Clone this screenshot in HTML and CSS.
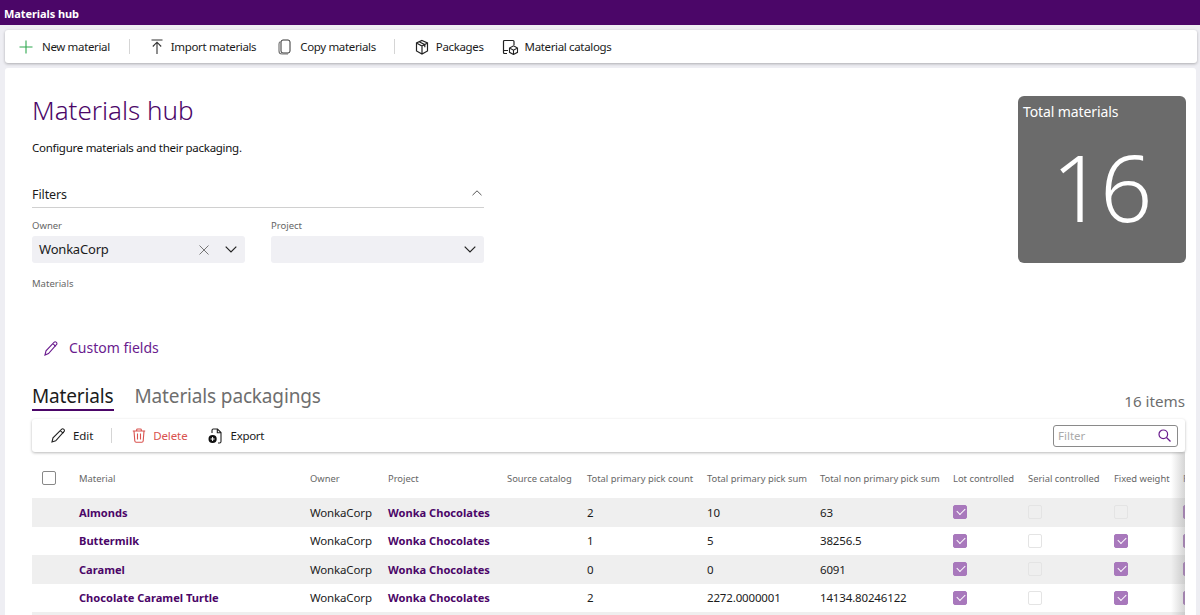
FILE: index.html
```
<!DOCTYPE html>
<html lang="en">
<head>
<meta charset="utf-8">
<title>Materials hub</title>
<link rel="stylesheet" href="styles.css">
</head>
<body>
<header class="appbar">Materials hub</header>
<nav class="cmdbar">
  <button class="cmd cmd-new"><svg width="14" height="14" viewBox="0 0 14 14" class="ic"><path d="M7 .5v13M.5 7h13" stroke="#2fa84f" stroke-width="1.100" fill="none"/></svg>New material</button>
  <span class="sep sep-a"></span>
  <button class="cmd cmd-import"><svg width="14" height="16" viewBox="0 0 14 16" class="ic"><path d="M1.500 1h11M7 15V3.500M2.800 7.500 7 3.200l4.200 4.300" stroke="#333" stroke-width="1.100" fill="none"/></svg>Import materials</button>
  <button class="cmd cmd-copy"><svg width="13" height="16" viewBox="0 0 13 16" class="ic"><rect x="3" y="1" width="9" height="13" rx="2" stroke="#333" fill="#fff"/><path d="M2.500 2.500C1.400 3 1 3.800 1 5v7c0 1.800 1 3 3 3h6" stroke="#777" stroke-width="1.200" fill="none"/></svg>Copy materials</button>
  <span class="sep sep-b"></span>
  <button class="cmd cmd-pack"><svg width="14" height="16" viewBox="0 0 14 16" class="ic"><path d="M7 1.500 12.500 4v8L7 15l-5.500-3V4zM1.500 4 7 7l5.500-3M7 7v8M4.200 2.800l5.600 2.900v2.500" stroke="#222" stroke-width="1.200" fill="none"/></svg>Packages</button>
  <button class="cmd cmd-cat"><svg width="17" height="16" viewBox="0 0 17 16" class="ic"><path d="M5 14.500H2.500a1 1 0 0 1-1-1v-11a1 1 0 0 1 1-1h8.500a1 1 0 0 1 1 1V6M1.500 11.500H6" stroke="#222" stroke-width="1.200" fill="none"/><path d="M11.500 6.800l4 2.200v4.300l-4 2.200-4-2.200V9zM7.500 9l4 2.200 4-2.200M11.500 11.200v4.300" stroke="#222" stroke-width="1.100" fill="#fff"/></svg>Material catalogs</button>
</nav>
<main class="panel">
  <section class="hero">
    <div class="intro">
      <h1 class="title">Materials hub</h1>
      <p class="subtitle">Configure materials and their packaging.</p>
      <div class="filters-head">
        <span>Filters</span>
        <svg width="10" height="6" viewBox="0 0 10 6"><path d="M.5 5.200 5 .8l4.500 4.400" stroke="#555" fill="none"/></svg>
      </div>
      <div class="fields">
        <div class="field">
          <label class="lbl">Owner</label>
          <div class="combo">
            <span class="combo-val">WonkaCorp</span>
            <svg class="x" width="10" height="10" viewBox="0 0 10 10"><path d="M.5.500l9 9M9.500.500l-9 9" stroke="#777" fill="none"/></svg>
            <svg class="chev" width="12" height="7" viewBox="0 0 12 7"><path d="M.7.700 6 6l5.300-5.300" stroke="#222" stroke-width="1.200" fill="none"/></svg>
          </div>
        </div>
        <div class="field">
          <label class="lbl">Project</label>
          <div class="combo">
            <span class="combo-val"></span>
            <svg class="chev" width="12" height="7" viewBox="0 0 12 7"><path d="M.7.700 6 6l5.300-5.300" stroke="#222" stroke-width="1.200" fill="none"/></svg>
          </div>
        </div>
      </div>
      <div class="lbl lbl-mat">Materials</div>
      <a class="custom"><svg width="14" height="15" viewBox="0 0 14 15"><path d="M1 14l1-4.200L10 1.300c.7-.7 1.700-.6 2.400 0s.7 1.700 0 2.400L4.500 12.600zM8.800 2.600l3.100 2.800" stroke="#6a1b8e" stroke-width="1.100" fill="none"/></svg>Custom fields</a>
    </div>
    <aside class="kpi">
      <div class="kpi-label">Total materials</div>
      <div class="kpi-num">16</div>
    </aside>
  </section>

  <div class="tabs">
    <span class="tab tab-on">Materials</span>
    <span class="tab">Materials packagings</span>
    <span class="count">16 items</span>
  </div>

  <div class="gridbar">
    <button class="cmd cmd-edit"><svg width="15" height="15" viewBox="0 0 15 15" class="ic"><path d="M1 14l1-4.200L10.500 1.300c.7-.7 1.700-.6 2.400 0s.7 1.700 0 2.400L4.700 12.800zM9.300 2.600l3 2.800" stroke="#222" stroke-width="1.100" fill="none"/></svg>Edit</button>
    <span class="sep sep-c"></span>
    <button class="cmd cmd-del"><svg width="14" height="15" viewBox="0 0 14 15" class="ic"><path d="M.8 3h12.400M4.700 3V1.800c0-.5.300-.8.800-.8h3c.5 0 .8.300.8.800V3M2 3l.8 10c.1.800.6 1.300 1.400 1.300h5.600c.8 0 1.300-.5 1.400-1.300L12 3M5.500 5.500v6M8.500 5.500v6" stroke="#d9534f" stroke-width="1.100" fill="none"/></svg>Delete</button>
    <button class="cmd cmd-exp"><svg width="14" height="16" viewBox="0 0 14 16" class="ic"><path d="M4 5V2.500C4 1.700 4.500 1 5.300 1h4.200L13 4.500v9c0 .8-.6 1.500-1.400 1.500H10M9.300 1v3.700H13" stroke="#222" stroke-width="1.100" fill="none"/><circle cx="4.600" cy="11" r="4.100" fill="#111"/><path d="M2.600 11h4M4.600 9v4" stroke="#fff"/></svg>Export</button>
    <div class="search"><span class="search-ph">Filter</span><svg width="13" height="13" viewBox="0 0 13 13"><circle cx="5.300" cy="5.300" r="4.300" stroke="#6a1b8e" stroke-width="1.200" fill="none"/><path d="M8.500 8.500l4 4" stroke="#6a1b8e" stroke-width="1.200"/></svg></div>
  </div>

  <div class="table-clip">
    <div class="row head">
      <span class="c"><i class="box box-head"></i></span><span>Material</span><span>Owner</span><span>Project</span><span>Source catalog</span><span>Total primary pick count</span><span>Total primary pick sum</span><span>Total non primary pick sum</span><span>Lot controlled</span><span>Serial controlled</span><span>Fixed weight</span><span>F</span>
    </div>
    <div class="row alt">
      <span class="c"></span><b>Almonds</b><span>WonkaCorp</span><b>Wonka Chocolates</b><span></span><span>2</span><span>10</span><span>63</span><span><i class="box on"></i></span><span><i class="box"></i></span><span><i class="box"></i></span><span><i class="box on"></i></span>
    </div>
    <div class="row">
      <span class="c"></span><b>Buttermilk</b><span>WonkaCorp</span><b>Wonka Chocolates</b><span></span><span>1</span><span>5</span><span>38256.5</span><span><i class="box on"></i></span><span><i class="box"></i></span><span><i class="box on"></i></span><span><i class="box on"></i></span>
    </div>
    <div class="row alt">
      <span class="c"></span><b>Caramel</b><span>WonkaCorp</span><b>Wonka Chocolates</b><span></span><span>0</span><span>0</span><span>6091</span><span><i class="box on"></i></span><span><i class="box"></i></span><span><i class="box on"></i></span><span><i class="box on"></i></span>
    </div>
    <div class="row">
      <span class="c"></span><b>Chocolate Caramel Turtle</b><span>WonkaCorp</span><b>Wonka Chocolates</b><span></span><span>2</span><span>2272.0000001</span><span>14134.80246122</span><span><i class="box on"></i></span><span><i class="box"></i></span><span><i class="box on"></i></span><span><i class="box on"></i></span>
    </div>
    <div class="row alt"></div>
    <div class="fade"></div>
  </div>
</main>
</body>
</html>
```
FILE: styles.css
```
* { box-sizing: border-box; }
html, body { margin: 0; height: 615px; overflow: hidden; }
body { background: #eeeef3; font-family: "Noto Sans", "Open Sans", sans-serif; color: #1b1b1b; font-size: 11.5px; }
button { font: inherit; color: inherit; background: none; border: 0; padding: 0; }
.appbar { height: 25px; background: #4b0668; color: #fff; font-weight: 700; font-size: 11px; line-height: 28px; padding-left: 4px; letter-spacing: -.08px; }
.cmdbar { display: flex; align-items: center; height: 33px; margin: 5px 3px 5px 5px; background: #fff; border-radius: 3px; box-shadow: 0 1px 3px rgba(0,0,0,.28); padding-left: 14px; }
.cmd { display: inline-flex; align-items: center; white-space: nowrap; letter-spacing: -.1px; }
.cmdbar .cmd { letter-spacing: -.35px; }
.ic { flex: none; }
.cmd-new .ic { margin-right: 9px; }
.cmd-import { margin-right: 22px; }
.cmd-import .ic { margin-right: 7px; }
.cmd-copy .ic { margin-right: 9px; }
.cmd-pack { margin-right: 18px; }
.cmd-pack .ic { margin-right: 7px; }
.cmd-cat .ic { margin-right: 6px; }
.sep { width: 1px; height: 15px; background: #d5d5d5; flex: none; }
.sep-a { margin: 0 20px 0 19px; }
.sep-b { margin: 0 20px 0 18px; }
.sep-c { margin: 0 20px 0 18px; }
.panel { margin: 0 4px 0 5px; background: #fff; height: 560px; border-radius: 3px 3px 0 0; padding: 0 11px 0 27px; }
.hero { display: flex; justify-content: space-between; align-items: flex-start; padding-top: 27px; }
.intro { width: 452px; }
.title { margin: 0; font-weight: 300; font-size: 26px; line-height: 30px; color: #4b0668; }
.subtitle { margin: 15px 0 0; font-size: 11.500px; line-height: 16px; letter-spacing: -.28px; color: #111; }
.filters-head { display: flex; justify-content: space-between; align-items: center; height: 25px; margin-top: 27px; border-bottom: 1px solid #d0d0d0; font-size: 12.500px; padding-right: 2px; }
.filters-head span { letter-spacing: -.1px; padding-bottom: 2px; }
.filters-head svg { margin-top: -4px; }
.fields { display: flex; gap: 26px; margin-top: 11px; }
.field { width: 213px; }
.lbl { display: block; font-size: 9.500px; line-height: 13px; color: #666; }
.combo { display: flex; align-items: center; height: 27px; margin-top: 4px; background: #f0f0f4; border-radius: 3px; padding: 0 8px 0 7px; font-size: 13px; letter-spacing: -.2px; }
.combo-val { flex: 1; padding-bottom: 2px; }
.combo .x { margin-right: 16px; }
.lbl-mat { margin-top: 14px; }
.custom { display: flex; align-items: center; gap: 11px; margin: 48px 0 0 12px; font-size: 14px; line-height: 20px; color: #6a1b8e; }
.kpi { width: 168px; height: 167px; background: #6b6b6b; border-radius: 6px; color: #fff; margin: 1px -1px 0 0; padding: 7px 5px; }
.kpi-label { font-size: 14px; line-height: 17px; letter-spacing: -.1px; }
.kpi-num { font-size: 92px; font-weight: 300; line-height: 96px; margin-top: 19px; text-align: center; padding-right: 4px; letter-spacing: -4px; }
.tabs { display: flex; align-items: flex-start; height: 36px; margin-top: 25px; font-size: 19px; line-height: 27px; color: #6e6e6e; }
.tab { margin-right: 21px; letter-spacing: -.15px; height: 28px; }
.tab-on { color: #1b1b1b; border-bottom: 2px solid #4b0668; }
.count { margin: 0 0 0 auto; font-size: 15.200px; color: #6e6e6e; padding-top: 5px; }
.gridbar { display: flex; align-items: center; height: 33px; background: #fff; border-radius: 3px; box-shadow: 0 1px 3px rgba(0,0,0,.28); padding: 0 7px 0 19px; }
.cmd-edit .ic { margin-right: 7px; }
.cmd-del { color: #d9534f; margin-right: 20px; }
.cmd-del .ic { margin-right: 7px; }
.cmd-exp .ic { margin-right: 9px; }
.cmd-exp { letter-spacing: -.3px; }
.search { display: flex; align-items: center; justify-content: space-between; width: 125px; height: 22px; margin-left: auto; border: 1px solid #8a8a8a; border-radius: 3px; padding: 0 6px 0 4px; }
.search-ph { color: #aaa; font-size: 11.500px; }
.table-clip { position: relative; overflow: hidden; height: 163px; margin-top: 0; }
.row { display: grid; grid-template-columns: 47px 231px 78px 119px 80px 120px 113px 133px 75px 86px 69px 100px; align-items: center; height: 28.5px; width: 1300px; font-size: 11.500px; letter-spacing: -.15px; }
.row b { color: #4b0668; font-weight: 700; font-size: 11.100px; letter-spacing: 0; }
.row > * { white-space: nowrap; }
.head { height: 46px; padding-top: 6px; color: #666; font-size: 9.400px; letter-spacing: 0; }
.alt { background: #efefef; }
.c { padding-left: 10px; }
.box { display: block; width: 14px; height: 14px; border: 1px solid #e4e4e4; border-radius: 2px; background: transparent; position: relative; }
.box-head { border: 1px solid #888; background: #fff; }
.box.on { background: #a878bc; border-color: #a878bc; }
.box.on::after { content: ""; position: absolute; left: 3px; top: 2px; width: 7px; height: 4px; border-left: 1px solid #fff; border-bottom: 1px solid #fff; transform: rotate(-45deg); }
.fade { position: absolute; top: 0; right: 0; bottom: 0; width: 14px; background: linear-gradient(to right, rgba(255,255,255,0), rgba(150,150,150,.4)); }
```
